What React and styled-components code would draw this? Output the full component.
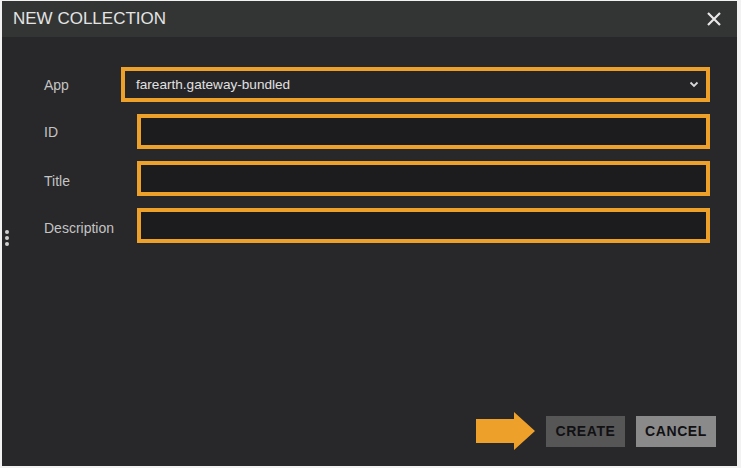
import React from 'react'
import styled, { createGlobalStyle } from 'styled-components'

const GlobalStyle = createGlobalStyle`
    html, body {
        margin: 0;
        padding: 0;
        background: #f2f2f2;
        font-family: "Liberation Sans", Arial, sans-serif;
    }
`

const Page = styled.div`
    width: 741px;
    height: 468px;
    padding: 1px 4px 2px 2px;
    box-sizing: border-box;
`

const Dialog = styled.div`
    position: relative;
    height: 100%;
    display: flex;
    flex-direction: column;
    background: #28282a;
`

const Header = styled.div`
    height: 36px;
    display: flex;
    align-items: center;
    justify-content: space-between;
    padding: 0 14px 0 11px;
    background: #333534;
`

const Title = styled.h1`
    margin: 0;
    font-size: 17px;
    font-weight: 400;
    color: #e4e4e4;
`

const CloseButton = styled.button`
    border: 0;
    background: none;
    padding: 0;
    width: 18px;
    height: 18px;
    cursor: pointer;
    display: flex;
`

const Body = styled.form`
    flex: 1;
    display: flex;
    flex-direction: column;
    padding: 30px 27px 16px 42px;
`

const Fields = styled.div`
    display: flex;
    flex-direction: column;
    gap: 12px;
`

const Row = styled.div`
    display: flex;
    align-items: center;
    height: 35px;
`

const Label = styled.label`
    width: ${p => p.$width}px;
    flex: none;
    font-size: 14px;
    color: #c4c4c4;
    padding-top: ${p => p.$drop || 0}px;
`

const Input = styled.input`
    flex: 1;
    height: 35px;
    box-sizing: border-box;
    border: 4px solid #eea12a;
    background: #1c1c1e;
    color: #ddd;
    outline: none;
`

const SelectBox = styled.div`
    flex: 1;
    height: 35px;
    box-sizing: border-box;
    border: 4px solid #eea12a;
    background: #252527;
    display: flex;
    align-items: center;
    justify-content: space-between;
    padding: 0 7px 0 11px;
    font-size: 13.6px;
    color: #e0e0e0;
`

const Footer = styled.div`
    margin-top: auto;
    display: flex;
    align-items: center;
    justify-content: flex-end;
    gap: 11px;
    margin-right: -6px;
`

const Arrow = styled.svg`
    width: 59px;
    height: 38px;
`

const Button = styled.button`
    height: 31px;
    width: ${p => p.$width}px;
    border: 0;
    background: ${p => p.$bg};
    color: #111113;
    font-family: "Liberation Sans", Arial, sans-serif;
    font-size: 14px;
    font-weight: 700;
    letter-spacing: 0.6px;
    cursor: pointer;
`

const Handle = styled.div`
    position: absolute;
    left: 3px;
    top: 229px;
    display: flex;
    flex-direction: column;
    gap: 2px;

    span {
        width: 4px;
        height: 4px;
        border-radius: 50%;
        background: #cfcfcf;
    }
`

const App = () => {
    return (
        <Page>
            <GlobalStyle />
            <Dialog>
                <Header>
                    <Title>NEW COLLECTION</Title>
                    <CloseButton type="button">
                        <svg width="18" height="18" viewBox="0 0 18 18">
                            <path d="M3 3 L15 15 M15 3 L3 15" stroke="#e8e8e8" strokeWidth="2.2" />
                        </svg>
                    </CloseButton>
                </Header>
                <Handle><span /><span /><span /></Handle>
                <Body onSubmit={(e) => e.preventDefault()}>
                    <Fields>
                        <Row>
                            <Label $width={77}>App</Label>
                            <SelectBox>
                                farearth.gateway-bundled
                                <svg width="10" height="7" viewBox="0 0 10 7">
                                    <path d="M1.5 1.5 L5 5 L8.5 1.5" stroke="#d8d8d8" strokeWidth="1.8" fill="none" />
                                </svg>
                            </SelectBox>
                        </Row>
                        <Row>
                            <Label $width={93}>ID</Label>
                            <Input type="text" />
                        </Row>
                        <Row>
                            <Label $width={93} $drop={4}>Title</Label>
                            <Input type="text" />
                        </Row>
                        <Row>
                            <Label $width={93} $drop={4}>Description</Label>
                            <Input type="text" />
                        </Row>
                    </Fields>
                    <Footer>
                        <Arrow viewBox="0 0 59 38">
                            <path d="M0 7 H38 V0 L59 19 L38 38 V31 H0 Z" fill="#eea12a" />
                        </Arrow>
                        <Button type="submit" $width={79} $bg="#565656">CREATE</Button>
                        <Button type="button" $width={80} $bg="#8a8a8a">CANCEL</Button>
                    </Footer>
                </Body>
            </Dialog>
        </Page>
    )
}

export default App
